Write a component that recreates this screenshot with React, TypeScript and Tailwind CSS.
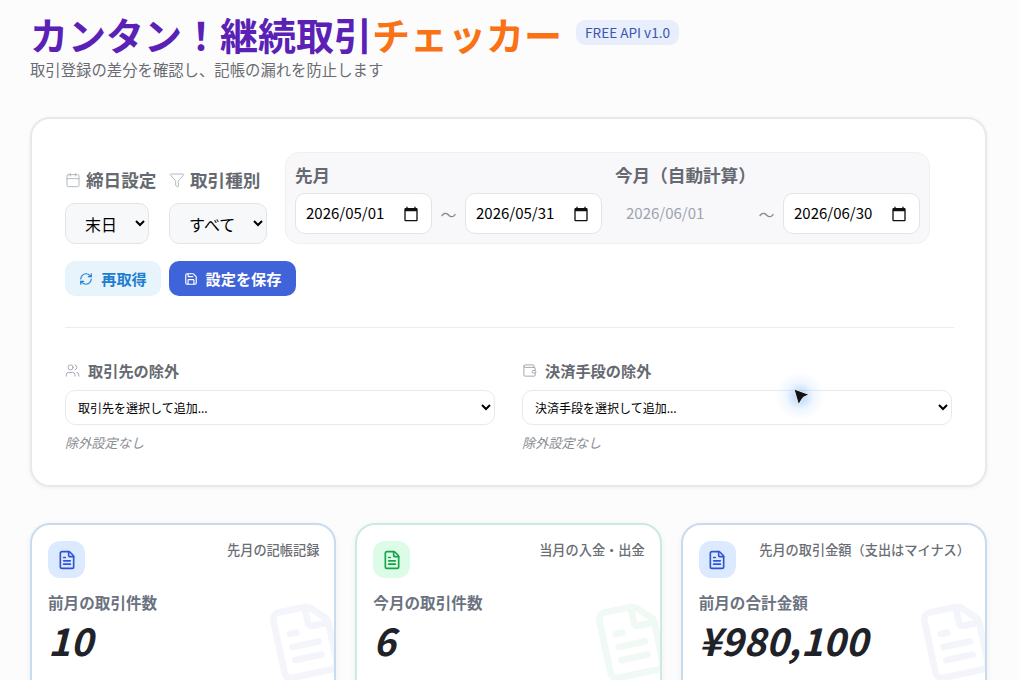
import { Calendar, Filter, RefreshCw, Save, Users, Wallet, FileText } from "lucide-react";

const font = { fontFamily: '"Noto Sans CJK JP", "Noto Sans", sans-serif' };

function DateBox({ value }: { value: string }) {
  return (
    <div className="w-[137px] h-[41px] rounded-[10px] border border-[#e3e4e8] bg-white pl-[10px] pr-[12px] text-[15px] text-black flex items-center justify-between">
      <span>{value}</span>
      <svg viewBox="0 0 24 24" className="w-[16px] h-[16px]" fill="#111">
        <path d="M20 3h-1V1h-2v2H7V1H5v2H4c-1.100 0-2 .9-2 2v16c0 1.100.9 2 2 2h16c1.100 0 2-.9 2-2V5c0-1.100-.9-2-2-2zm0 18H4V8h16v13z" />
      </svg>
    </div>
  );
}

function Stat({ tone, sub, label, value }: { tone: "blue" | "green"; sub: string; label: string; value: string }) {
  const blue = tone === "blue";
  return (
    <div className={`relative overflow-hidden h-[180px] rounded-[20px] bg-white border-2 px-[16px] pt-[16px] shadow-[0_2px_6px_rgba(0,0,0,0.06)] ${blue ? "border-[#c9dbef]" : "border-[#cdebdc]"}`}>
      <div className="flex justify-between items-start">
        <div className={`w-[37px] h-[37px] rounded-[12px] flex items-center justify-center ${blue ? "bg-[#dbeafe] text-[#2f55d4]" : "bg-[#dcfce7] text-[#16a34a]"}`}>
          <FileText size={20} strokeWidth={2} />
        </div>
        <div className="text-[13.2px] leading-[18px] text-[#6b6e75] font-medium mr-[-1px]">{sub}</div>
      </div>
      <div className="mt-[12px] text-[15.6px] leading-[24px] font-bold text-[#6b7280]">{label}</div>
      <div className="mt-[2px] text-[38px] leading-[48px] font-bold italic text-[#1f2329]">{value}</div>
      <div className={`absolute right-[-11px] top-[76px] rotate-[-12deg] ${blue ? "text-[#f3f5fa]" : "text-[#f0f9f4]"}`}>
        <FileText size={80} strokeWidth={2} />
      </div>
    </div>
  );
}

export default function App() {
  return (
    <div style={font} className="relative h-[680px] w-[1020px] overflow-hidden bg-[#fcfcfd] px-[30px]">
      <div className="flex items-center gap-[14px] pt-[10px] pb-[1px]">
        <h1 className="text-[38px] leading-[47px] font-bold text-[#5b21b6] whitespace-nowrap">
          カンタン！継続取引<span className="text-[#f97316]">チェッカー</span>
        </h1>
        <span className="rounded-[9px] bg-[#e8eefb] px-[9px] h-[25px] flex items-center text-[13.6px] text-[#3b56b0] mb-[3px]">FREE API v1.0</span>
      </div>
      <p className="text-[15.36px] leading-[22px] text-[#6a6c72]">取引登録の差分を確認し、記帳の漏れを防止します</p>

      <section className="mt-[37px] w-[957px] h-[370px] rounded-[20px] border-2 border-[#e9e9ec] bg-white pl-[33px] pr-[31px] pt-[33px] shadow-[0_1px_4px_rgba(0,0,0,0.05)]">
        <div className="flex items-end">
          <div className="w-[104px]">
            <div className="flex items-center gap-[5px] h-[24px] text-[17.6px] font-bold text-[#666a70] mb-[11px] whitespace-nowrap">
              <Calendar size={16} strokeWidth={1.5} className="text-[#b4b8c0]" />締日設定
            </div>
            <select className="w-[84px] h-[41px] rounded-[10px] border border-[#e3e4e8] bg-[#f7f8fa] text-[16px] text-black pl-[15px]">
              <option>末日</option>
            </select>
          </div>
          <div className="w-[116px]">
            <div className="flex items-center gap-[5px] h-[24px] text-[17.6px] font-bold text-[#666a70] mb-[11px] whitespace-nowrap">
              <Filter size={16} strokeWidth={1.5} className="text-[#b4b8c0]" />取引種別
            </div>
            <select className="w-[98px] h-[41px] rounded-[10px] border border-[#e3e4e8] bg-[#f7f8fa] text-[16px] text-black pl-[15px]">
              <option>すべて</option>
            </select>
          </div>
          <div className="w-[645px] h-[92px] rounded-[14px] border border-[#f0f0f4] bg-[#f8f8fb] px-[9px] pt-[10px] flex">
            <div className="w-[320px]">
              <div className="text-[17.6px] leading-[24px] font-bold text-[#666a70]">先月</div>
              <div className="mt-[6px] flex items-center">
                <DateBox value="2026/05/01" />
                <span className="w-[33px] text-center text-[#888]">～</span>
                <DateBox value="2026/05/31" />
              </div>
            </div>
            <div>
              <div className="text-[17.6px] leading-[24px] font-bold text-[#666a70]">今月（自動計算）</div>
              <div className="mt-[6px] flex items-center">
                <div className="w-[135px] h-[41px] flex items-center pl-[11px] text-[15px] text-[#9ca3af]">2026/06/01</div>
                <span className="w-[33px] text-center text-[#888]">～</span>
                <DateBox value="2026/06/30" />
              </div>
            </div>
          </div>
        </div>

        <div className="mt-[17px] flex gap-[8px]">
          <button className="w-[96px] h-[35px] rounded-[10px] bg-[#e8f4fc] text-[#1d7fd0] text-[15.2px] font-bold flex items-center justify-center gap-[8px]">
            <RefreshCw size={14} />再取得
          </button>
          <button className="w-[127px] h-[35px] rounded-[10px] bg-[#3f63d8] text-white text-[15.2px] font-bold flex items-center justify-center gap-[8px]">
            <Save size={14} />設定を保存
          </button>
        </div>

        <hr className="mt-[31px] border-[#ececef]" />

        <div className="mt-[30px] grid grid-cols-2 gap-[27px] w-[887px]">
          <div>
            <div className="flex items-center gap-[8px] h-[24px] text-[15.2px] font-bold text-[#666a70]">
              <Users size={15} strokeWidth={1.5} className="text-[#9ca3af]" />取引先の除外
            </div>
            <select className="mt-[8px] w-full h-[35px] rounded-[10px] border border-[#e9e9ec] bg-white pl-[8px] pr-[1px] text-[12px] text-black">
              <option>取引先を選択して追加...</option>
            </select>
            <div className="mt-[8px] text-[13.2px] leading-[20px] italic text-[#8b8d93]">除外設定なし</div>
          </div>
          <div>
            <div className="flex items-center gap-[8px] h-[24px] text-[15.2px] font-bold text-[#666a70]">
              <Wallet size={15} strokeWidth={1.5} className="text-[#9ca3af]" />決済手段の除外
            </div>
            <select className="mt-[8px] w-full h-[35px] rounded-[10px] border border-[#e9e9ec] bg-white pl-[8px] pr-[1px] text-[12px] text-black">
              <option>決済手段を選択して追加...</option>
            </select>
            <div className="mt-[8px] text-[13.2px] leading-[20px] italic text-[#8b8d93]">除外設定なし</div>
          </div>
        </div>
      </section>

      <div className="mt-[36px] grid grid-cols-3 gap-[19px] w-[957px]">
        <Stat tone="blue" sub="先月の記帳記録" label="前月の取引件数" value="10" />
        <Stat tone="green" sub="当月の入金・出金" label="今月の取引件数" value="6" />
        <Stat tone="blue" sub="先月の取引金額（支出はマイナス）" label="前月の合計金額" value="¥980,100" />
      </div>

      <div className="absolute left-[770px] top-[366px] w-[60px] h-[60px] pointer-events-none rounded-full bg-[radial-gradient(circle,rgba(96,165,250,0.5)_0%,rgba(147,197,253,0.15)_32%,rgba(255,255,255,0)_58%)]">
        <svg viewBox="0 0 20 20" className="absolute left-[22px] top-[21px] w-[20px] h-[20px]">
          <path d="M2 2 L17 7.500 L11 10.500 L6.500 17.500 Z" fill="#111" stroke="#fff" strokeWidth="0.8" />
        </svg>
      </div>
    </div>
  );
}
